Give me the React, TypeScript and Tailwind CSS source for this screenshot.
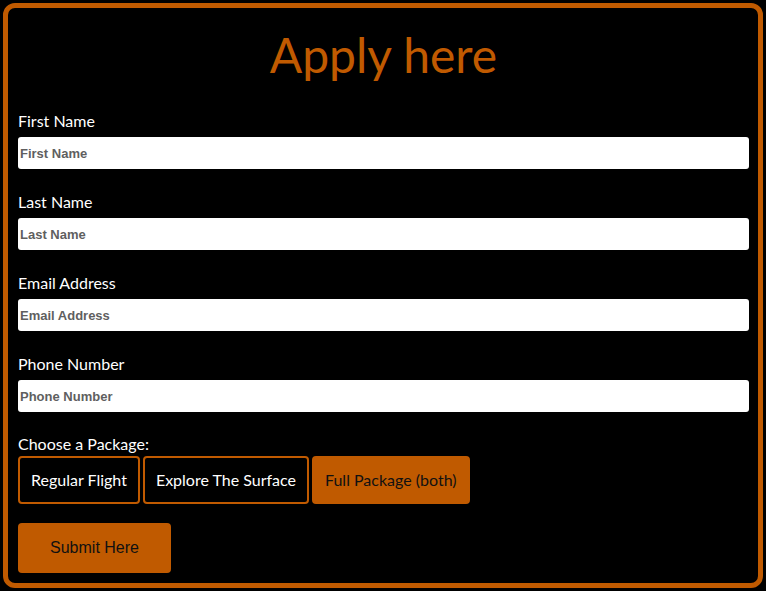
import React from "react";

const fields = ["First Name", "Last Name", "Email Address", "Phone Number"];

export default function App() {
  return (
    <div className="min-h-[591px] w-[766px] bg-black p-[3px]">
      <div
        className="flex h-[585px] w-[760px] flex-col rounded-[12px] border-[5px] border-[#c05a00] bg-black pl-[10px] pr-[9px] pt-[10px]"
        style={{ fontFamily: '"Lato", "Noto Sans", sans-serif' }}
      >
        <h1 className="mt-[7px] mb-[24px] text-center text-[48px] leading-[60px] text-[#c05a00]">
          Apply here
        </h1>
        {fields.map((f, i) => (
          <div key={f} className={`flex flex-col ${i === 3 ? "mb-[20px]" : "mb-[21px]"}`}>
            <label className="mb-[4px] text-[16px] leading-[24px] text-white">{f}</label>
            <input
              placeholder={f}
              className="h-[32px] w-full rounded-[3px] bg-white px-[2px] text-[13px] font-bold text-[#555] placeholder:text-[#5f5f5f] outline-none"
              style={{ fontFamily: '"Liberation Sans", Arial, sans-serif' }}
            />
          </div>
        ))}
        <div className="flex flex-col">
          <label className="text-[16px] leading-[24px] text-white">Choose a Package:</label>
          <div className="flex gap-[3px]">
            <button className="h-[48px] rounded-[4px] border-2 border-[#c05a00] px-[11px] text-[16px] text-white">
              Regular Flight
            </button>
            <button className="h-[48px] rounded-[4px] border-2 border-[#c05a00] px-[11px] text-[16px] text-white">
              Explore The Surface
            </button>
            <button className="h-[48px] rounded-[4px] border-2 border-[#c05a00] bg-[#c05a00] px-[11px] text-[16px] text-[#111]">
              Full Package (both)
            </button>
          </div>
        </div>
        <button
          className="mt-[19px] h-[50px] w-[153px] rounded-[4px] bg-[#c05a00] text-[16px] text-[#111]"
          style={{ fontFamily: '"Liberation Sans", Arial, sans-serif' }}
        >
          Submit Here
        </button>
      </div>
    </div>
  );
}
